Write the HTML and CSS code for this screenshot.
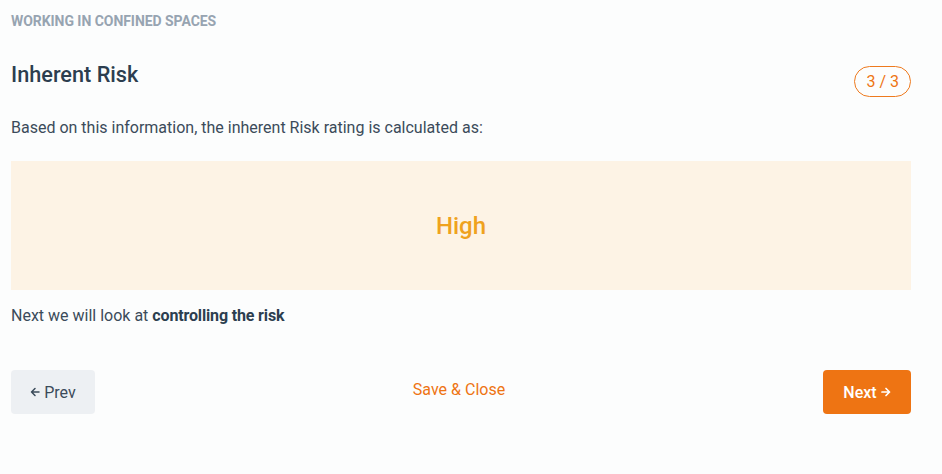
FILE: index.html
```html
<!DOCTYPE html>
<html>
<head>
<meta charset="utf-8">
<link rel="stylesheet" href="styles.css">
</head>
<body>
<div class="page">
  <div class="eyebrow">WORKING IN CONFINED SPACES</div>
  <div class="title-row">
    <h1 class="title">Inherent Risk</h1>
    <span class="badge">3 / 3</span>
  </div>
  <p class="intro">Based on this information, the inherent Risk rating is calculated as:</p>
  <div class="rating"><span class="rating-text">High</span></div>
  <p class="next-text">Next we will look at <strong>controlling the risk</strong></p>
  <div class="actions">
    <button class="btn btn-prev"><svg class="arrow" width="10" height="10" viewBox="0 0 10 10"><path d="M9 5H1.5M5 1.5L1.5 5L5 8.5" fill="none" stroke="currentColor" stroke-width="1.5" stroke-linecap="round" stroke-linejoin="round"/></svg><span>Prev</span></button>
    <button class="link-save">Save &amp; Close</button>
    <button class="btn btn-next"><span>Next</span><svg class="arrow" width="10" height="10" viewBox="0 0 10 10"><path d="M1 5H8.5M5 1.5L8.5 5L5 8.5" fill="none" stroke="currentColor" stroke-width="1.7" stroke-linecap="round" stroke-linejoin="round"/></svg></button>
  </div>
</div>
</body>
</html>
```
FILE: styles.css
```css
html, body {
  margin: 0;
  padding: 0;
  background: #fcfdfd;
  font-family: Roboto, "Liberation Sans", sans-serif;
  color: #34495a;
}
.page {
  width: 900px;
  padding: 13px 11px 0 11px;
}
.eyebrow {
  font-size: 14px;
  font-weight: 700;
  color: #97a4b1;
  line-height: 16px;
  letter-spacing: -0.05px;
}
.title-row {
  display: flex;
  justify-content: space-between;
  align-items: flex-start;
  margin-top: 33px;
}
.title {
  margin: 0;
  font-size: 21.7px;
  font-weight: 500;
  color: #2c3e4f;
  line-height: 26px;
}
.badge {
  margin-top: 4px;
  border: 1px solid #ee7a1e;
  border-radius: 16px;
  color: #ee7413;
  font-size: 16px;
  line-height: 19px;
  padding: 5px 11px;
}
.intro {
  margin: 21px 0 0 0;
  font-size: 16px;
  line-height: 20px;
  color: #3b4b5a;
}
.rating {
  margin-top: 23px;
  height: 129px;
  background: #fdf3e5;
  display: flex;
  align-items: center;
  justify-content: center;
}
.rating-text {
  font-size: 24px;
  font-weight: 500;
  color: #efa21e;
  margin-top: 1px;
}
.next-text {
  margin: 16px 0 0 0;
  font-size: 16px;
  line-height: 20px;
  color: #3b4b5a;
}
.next-text strong {
  font-weight: 700;
  color: #2c3e4f;
  letter-spacing: -0.15px;
}
.actions {
  margin-top: 44px;
  display: flex;
  justify-content: space-between;
  align-items: flex-start;
}
.btn {
  border: none;
  border-radius: 4px;
  height: 44px;
  font-family: Roboto, "Liberation Sans", sans-serif;
  font-size: 16px;
  cursor: pointer;
  display: flex;
  align-items: center;
  justify-content: center;
  gap: 4px;
  padding: 0;
}
.btn-prev {
  width: 84px;
  background: #edf0f3;
  color: #3b4b5a;
}
.btn-next {
  width: 88px;
  background: #ee7413;
  color: #ffffff;
  font-weight: 500;
}
.arrow {
  display: block;
}
.link-save {
  background: none;
  border: none;
  font-family: Roboto, "Liberation Sans", sans-serif;
  font-size: 16px;
  color: #ee7413;
  padding: 0;
  margin-top: 10px;
  cursor: pointer;
}
```
